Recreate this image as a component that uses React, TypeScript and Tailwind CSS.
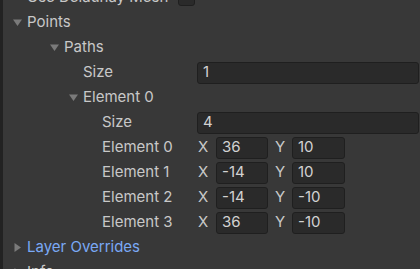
const font = { fontFamily: 'Inter, "Noto Sans", sans-serif' }

const Tri = ({ open }: { open: boolean }) => (
  <svg width="9" height="9" viewBox="0 0 9 9" className="shrink-0">
    {open ? <path d="M0 1.5 L9 1.5 L4.5 8 Z" fill="#7a7a7a" /> : <path d="M1.5 0 L8 4.5 L1.5 9 Z" fill="#7a7a7a" />}
  </svg>
)

const Field = ({ value, className }: { value: string; className: string }) => (
  <div
    className={`h-[22px] rounded-[3px] border border-[#1f1f1f] bg-[#2a2a2a] pl-[5px] flex items-center text-[15px] text-[#d2d2d2] ${className}`}
  >
    {value}
  </div>
)

const Foldout = ({ label, indent, open, blue }: { label: string; indent: string; open: boolean; blue?: boolean }) => (
  <div className={`h-[25px] flex items-center ${indent}`}>
    <Tri open={open} />
    <span className={`ml-[5px] ${blue ? 'text-[#7aa9f5]' : 'text-[#c8c8c8]'}`}>{label}</span>
  </div>
)

const points = [
  { x: '36', y: '10' },
  { x: '-14', y: '10' },
  { x: '-14', y: '-10' },
  { x: '36', y: '-10' },
]

export default function App() {
  return (
    <div className="w-[420px] h-[269px] overflow-hidden bg-[#383838] border-l-[3px] border-[#222222] text-[15px]" style={font}>
      <div className="mt-[-15px]">
        <div className="h-[25px] flex items-center pl-[24px]">
          <span className="w-[151px] text-[#c8c8c8]">Use Delaunay Mesh</span>
          <div className="w-[17px] h-[17px] rounded-[3px] border border-[#1f1f1f] bg-[#2a2a2a]" />
        </div>
        <Foldout label="Points" indent="pl-[10px]" open />
        <Foldout label="Paths" indent="pl-[47px]" open />
        <div className="h-[25px] flex items-center pl-[80px]">
          <span className="w-[114px] text-[#c8c8c8]">Size</span>
          <Field value="1" className="flex-1 mr-[1px]" />
        </div>
        <Foldout label="Element 0" indent="pl-[66px]" open />
        <div className="h-[25px] flex items-center pl-[99px]">
          <span className="w-[95px] text-[#c8c8c8]">Size</span>
          <Field value="4" className="flex-1 mr-[1px]" />
        </div>
        {points.map((p, i) => (
          <div key={i} className="h-[25px] flex items-center pl-[99px]">
            <span className="w-[96px] text-[#c8c8c8]">Element {i}</span>
            <span className="w-[18px] text-[#c8c8c8]">X</span>
            <Field value={p.x} className="w-[52px]" />
            <span className="w-[24px] pl-[7px] text-[#c8c8c8]">Y</span>
            <Field value={p.y} className="w-[53px]" />
          </div>
        ))}
        <Foldout label="Layer Overrides" indent="pl-[10px]" open={false} blue />
        <Foldout label="Info" indent="pl-[10px]" open={false} />
      </div>
    </div>
  )
}
